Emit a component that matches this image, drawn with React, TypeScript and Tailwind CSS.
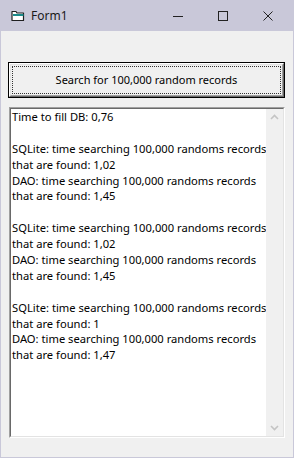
import React from 'react';

const lines: string[] = [
  'Time to fill DB: 0,76',
  '',
  'SQLite: time searching 100,000 randoms records',
  'that are found: 1,02',
  'DAO: time searching 100,000 randoms records',
  'that are found: 1,45',
  '',
  'SQLite: time searching 100,000 randoms records',
  'that are found: 1,02',
  'DAO: time searching 100,000 randoms records',
  'that are found: 1,45',
  '',
  'SQLite: time searching 100,000 randoms records',
  'that are found: 1',
  'DAO: time searching 100,000 randoms records',
  'that are found: 1,47',
];

const FormIcon = () => (
  <svg width="14" height="12" viewBox="0 0 14 12" className="shrink-0">
    <path d="M1 1.5h4l1 1.5h6.5v7.5H1z" fill="#ffffff" stroke="#1f1f1f" strokeWidth="1.2" strokeLinejoin="round" />
    <rect x="2" y="4" width="10.5" height="2" fill="#1a8a8a" />
  </svg>
);

export default function App() {
  return (
    <div
      className="w-[294px] h-[458px] flex flex-col bg-[#c9c8d9] px-px pb-px overflow-hidden"
      style={{ fontFamily: '"Noto Sans", "Open Sans", Arial, sans-serif' }}
    >
      {/* title bar */}
      <div className="h-[31px] flex items-center shrink-0">
        <div className="flex items-center gap-[6px] pl-[10px] flex-1">
          <FormIcon />
          <span className="text-[12px] text-[#1a1a1a]">Form1</span>
        </div>
        <div className="flex items-center h-full">
          <div className="w-[45px] h-full flex items-center justify-center">
            <svg width="10" height="10" viewBox="0 0 10 10">
              <path d="M0 5.5h10" stroke="#222" strokeWidth="1" />
            </svg>
          </div>
          <div className="w-[45px] h-full flex items-center justify-center">
            <svg width="10" height="10" viewBox="0 0 10 10">
              <rect x="0.5" y="0.5" width="9" height="9" fill="none" stroke="#222" strokeWidth="1" />
            </svg>
          </div>
          <div className="w-[45px] h-full flex items-center justify-center mr-[3px]">
            <svg width="10" height="10" viewBox="0 0 10 10">
              <path d="M0.5 0.5l9 9M9.5 0.5l-9 9" stroke="#222" strokeWidth="1" />
            </svg>
          </div>
        </div>
      </div>

      {/* client area */}
      <div className="flex-1 flex flex-col bg-[#f0f0f0] pl-[7px] pr-[8px] pt-[31px] pb-[19px]">
        {/* default push button */}
        <div className="h-[36px] border border-black shrink-0">
          <div className="h-full border-t border-l border-white border-r border-b border-r-[#696969] border-b-[#696969]">
            <div className="h-full border-r border-b border-r-[#a0a0a0] border-b-[#a0a0a0] border-t border-l border-t-[#e3e3e3] border-l-[#e3e3e3] p-[1px]">
              <div className="h-full border border-dotted border-[#333] flex items-center justify-center text-[11px] text-black">
                Search for 100,000 random records
              </div>
            </div>
          </div>
        </div>

        {/* multiline text box */}
        <div className="mt-[9px] ml-px flex-1 flex border-t border-l border-[#a0a0a0] border-r border-b border-r-white border-b-white">
          <div className="flex-1 min-w-0 flex border-t border-l border-[#696969] border-r border-b border-r-[#e3e3e3] border-b-[#e3e3e3] bg-white">
            <div className="flex-1 min-w-0 overflow-hidden pl-[1px] text-[11.2px] leading-[15.9px] text-black whitespace-pre">
              {lines.map((l, i) => (
                <div key={i} className="h-[15.9px]">{l}</div>
              ))}
            </div>
            <div className="w-[17px] shrink-0 bg-[#f0f0f0] flex flex-col justify-between items-center py-[5px]">
              <svg width="9" height="6" viewBox="0 0 9 6">
                <path d="M1 5l3.5-3.5L8 5" fill="none" stroke="#c4c4c4" strokeWidth="1.6" />
              </svg>
              <svg width="9" height="6" viewBox="0 0 9 6">
                <path d="M1 1l3.5 3.5L8 1" fill="none" stroke="#c4c4c4" strokeWidth="1.6" />
              </svg>
            </div>
          </div>
        </div>
      </div>
    </div>
  );
}
